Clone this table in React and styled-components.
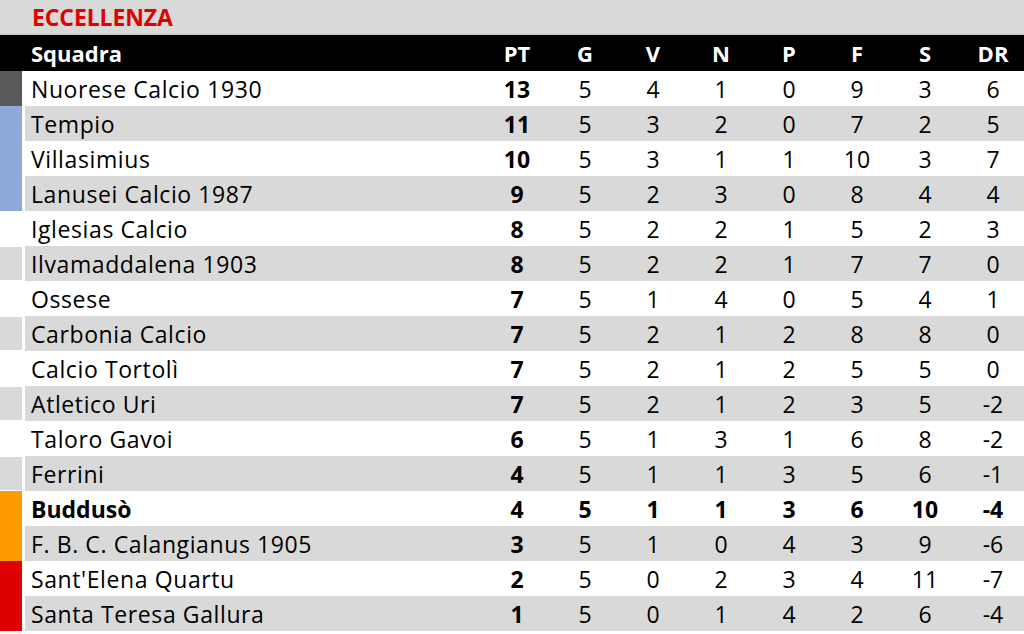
import React from "react";
import styled, { createGlobalStyle } from "styled-components";

const GlobalStyle = createGlobalStyle`
  html, body {
    margin: 0;
    padding: 0;
    background: #ffffff;
    overflow: hidden;
  }
  body {
    font-family: "Open Sans", "Liberation Sans", sans-serif;
    color: #000;
  }
`;

const COLS = "25px 458px repeat(8, 68px)";

const teams = [
  { name: "Nuorese Calcio 1930", pt: 13, g: 5, v: 4, n: 1, p: 0, f: 9, s: 3, dr: 6, mark: "#595959" },
  { name: "Tempio", pt: 11, g: 5, v: 3, n: 2, p: 0, f: 7, s: 2, dr: 5, mark: "#8eaadb" },
  { name: "Villasimius", pt: 10, g: 5, v: 3, n: 1, p: 1, f: 10, s: 3, dr: 7, mark: "#8eaadb" },
  { name: "Lanusei Calcio 1987", pt: 9, g: 5, v: 2, n: 3, p: 0, f: 8, s: 4, dr: 4, mark: "#8eaadb" },
  { name: "Iglesias Calcio", pt: 8, g: 5, v: 2, n: 2, p: 1, f: 5, s: 2, dr: 3 },
  { name: "Ilvamaddalena 1903", pt: 8, g: 5, v: 2, n: 2, p: 1, f: 7, s: 7, dr: 0 },
  { name: "Ossese", pt: 7, g: 5, v: 1, n: 4, p: 0, f: 5, s: 4, dr: 1 },
  { name: "Carbonia Calcio", pt: 7, g: 5, v: 2, n: 1, p: 2, f: 8, s: 8, dr: 0 },
  { name: "Calcio Tortolì", pt: 7, g: 5, v: 2, n: 1, p: 2, f: 5, s: 5, dr: 0 },
  { name: "Atletico Uri", pt: 7, g: 5, v: 2, n: 1, p: 2, f: 3, s: 5, dr: -2 },
  { name: "Taloro Gavoi", pt: 6, g: 5, v: 1, n: 3, p: 1, f: 6, s: 8, dr: -2 },
  { name: "Ferrini", pt: 4, g: 5, v: 1, n: 1, p: 3, f: 5, s: 6, dr: -1 },
  { name: "Buddusò", pt: 4, g: 5, v: 1, n: 1, p: 3, f: 6, s: 10, dr: -4, mark: "#ff9a00", bold: true },
  { name: "F. B. C. Calangianus 1905", pt: 3, g: 5, v: 1, n: 0, p: 4, f: 3, s: 9, dr: -6, mark: "#ff9a00" },
  { name: "Sant'Elena Quartu", pt: 2, g: 5, v: 0, n: 2, p: 3, f: 4, s: 11, dr: -7, mark: "#df0000" },
  { name: "Santa Teresa Gallura", pt: 1, g: 5, v: 0, n: 1, p: 4, f: 2, s: 6, dr: -4, mark: "#df0000" },
];

const statKeys = ["g", "v", "n", "p", "f", "s", "dr"];

const Sheet = styled.div`
  width: 1024px;
  overflow: hidden;
`;

const TitleBar = styled.div`
  height: 34px;
  background: #d9d9d9;
  border-bottom: 1px solid #bfbfbf;
  display: flex;
  align-items: center;
  padding-left: 32px;
  color: #e00000;
  font-weight: 700;
  font-size: 23px;
  letter-spacing: -0.1px;
`;

const HeaderRow = styled.div`
  display: grid;
  grid-template-columns: ${COLS};
  height: 36px;
  background: #000;
  color: #fff;
  font-weight: 700;
  font-size: 22px;
  align-items: center;
`;

const Row = styled.div`
  display: grid;
  grid-template-columns: ${COLS};
  height: 35px;
  background: ${(p) => (p.$shade ? "#d9d9d9" : "#ffffff")};
  font-size: 23px;
  font-weight: ${(p) => (p.$bold ? 700 : 400)};
  align-items: stretch;
`;

const Mark = styled.div`
  background: ${(p) => p.$color};
  border-right: 3px solid #fff;
  box-shadow: ${(p) => (p.$plain ? "inset 0 1px 0 #fff, inset 0 -1px 0 #fff" : "none")};
`;

const NameCell = styled.div`
  display: flex;
  align-items: center;
  padding-left: 6px;
  white-space: nowrap;
  letter-spacing: ${(p) => (p.$bold ? "0" : "0.6px")};
`;

const HeadName = styled.div`
  padding-left: 6px;
`;

const Num = styled.div`
  display: flex;
  align-items: center;
  justify-content: center;
  font-weight: ${(p) => (p.$bold ? 700 : "inherit")};
`;

export default function App() {
  return (
    <Sheet>
      <GlobalStyle />
      <TitleBar>ECCELLENZA</TitleBar>
      <HeaderRow>
        <div />
        <HeadName>Squadra</HeadName>
        {["PT", "G", "V", "N", "P", "F", "S", "DR"].map((h) => (
          <Num key={h}>{h}</Num>
        ))}
      </HeaderRow>
      {teams.map((t, i) => {
        const shade = i % 2 === 1;
        const base = shade ? "#d9d9d9" : "#ffffff";
        return (
          <Row key={t.name} $shade={shade} $bold={t.bold}>
            <Mark $color={t.mark || base} $plain={!t.mark} />
            <NameCell $bold={t.bold}>{t.name}</NameCell>
            <Num $bold>{t.pt}</Num>
            {statKeys.map((k) => (
              <Num key={k}>{t[k]}</Num>
            ))}
          </Row>
        );
      })}
    </Sheet>
  );
}
